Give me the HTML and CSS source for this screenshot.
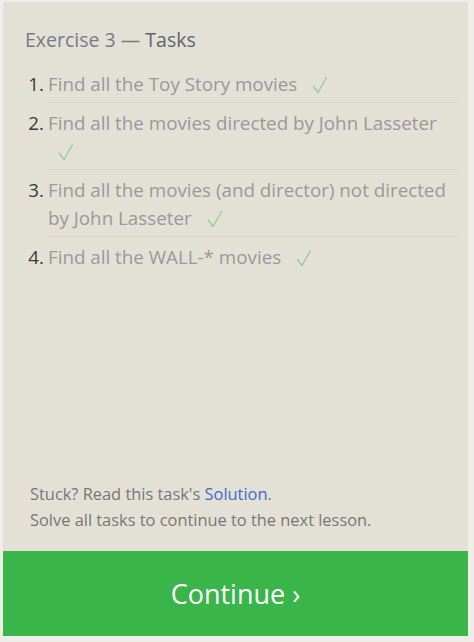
FILE: index.html
```html
<!DOCTYPE html>
<html>
<head>
<meta charset="utf-8">
<link rel="stylesheet" href="styles.css">
</head>
<body>
<div class="page">
  <div class="panel">
    <h2 class="title"><span class="title-pre">Exercise 3 —</span> <span class="title-main">Tasks</span></h2>
    <ol class="tasks">
      <li class="task"><span class="num">1.</span><span class="text">Find all the Toy Story movies <svg class="check" viewBox="0 0 16 18" width="16" height="18"><path d="M1.5 10.5 L6 16.5 L14.5 1.5"/></svg></span></li>
      <li class="task"><span class="num">2.</span><span class="text">Find all the movies directed by John Lasseter <svg class="check" viewBox="0 0 16 18" width="16" height="18"><path d="M1.5 10.5 L6 16.5 L14.5 1.5"/></svg></span></li>
      <li class="task"><span class="num">3.</span><span class="text">Find all the movies (and director) not directed by John Lasseter <svg class="check" viewBox="0 0 16 18" width="16" height="18"><path d="M1.5 10.5 L6 16.5 L14.5 1.5"/></svg></span></li>
      <li class="task last"><span class="num">4.</span><span class="text">Find all the WALL-* movies <svg class="check" viewBox="0 0 16 18" width="16" height="18"><path d="M1.5 10.5 L6 16.5 L14.5 1.5"/></svg></span></li>
    </ol>
    <div class="spacer"></div>
    <div class="footer">
      <p class="note">Stuck? Read this task's <a class="link" href="#">Solution</a>.</p>
      <p class="note">Solve all tasks to continue to the next lesson.</p>
    </div>
  </div>
  <div class="continue">Continue ›</div>
</div>
</body>
</html>
```
FILE: styles.css
```css
html, body {
  margin: 0;
  padding: 0;
}
body {
  background: #efede7;
  font-family: "Open Sans", "Noto Sans", sans-serif;
  width: 474px;
  height: 642px;
  overflow: hidden;
}
.page {
  width: 465px;
  margin-left: 3px;
  padding-top: 2px;
}
.panel {
  background: #e3e0d6;
  height: 549px;
  box-sizing: border-box;
  padding: 24px 10px 18px 22px;
  display: flex;
  flex-direction: column;
}
.title {
  margin: 0;
  font-size: 19.5px;
  font-weight: normal;
  line-height: 28px;
  color: #767c86;
}
.title-main {
  color: #5d6470;
}
.tasks {
  list-style: none;
  margin: 10px 0 0 0;
  padding: 0;
}
.task {
  display: flex;
  font-size: 18.8px;
  line-height: 28px;
}
.num {
  width: 19px;
  margin-right: 4px;
  flex: none;
  text-align: right;
  color: #3a3a3a;
  padding-top: 6px;
}
.text {
  flex: 1;
  color: #999;
  padding: 6px 0 4px 0;
  border-bottom: 1px solid #d9d6cc;
}
.task.last .text {
  border-bottom: none;
}
.check {
  margin-left: 10px;
  vertical-align: -3px;
  fill: none;
  stroke: #8fd198;
  stroke-width: 1.4;
  stroke-linecap: round;
  stroke-linejoin: round;
}
.spacer {
  flex: 1;
}
.footer {
  padding-left: 5px;
}
.note {
  margin: 0;
  font-size: 16.4px;
  line-height: 26px;
  color: #777;
}
.link {
  color: #3f6ad0;
  text-decoration: none;
}
.continue {
  background: #39b54a;
  height: 85px;
  line-height: 85px;
  text-align: center;
  color: #fff;
  font-size: 27px;
}
```
